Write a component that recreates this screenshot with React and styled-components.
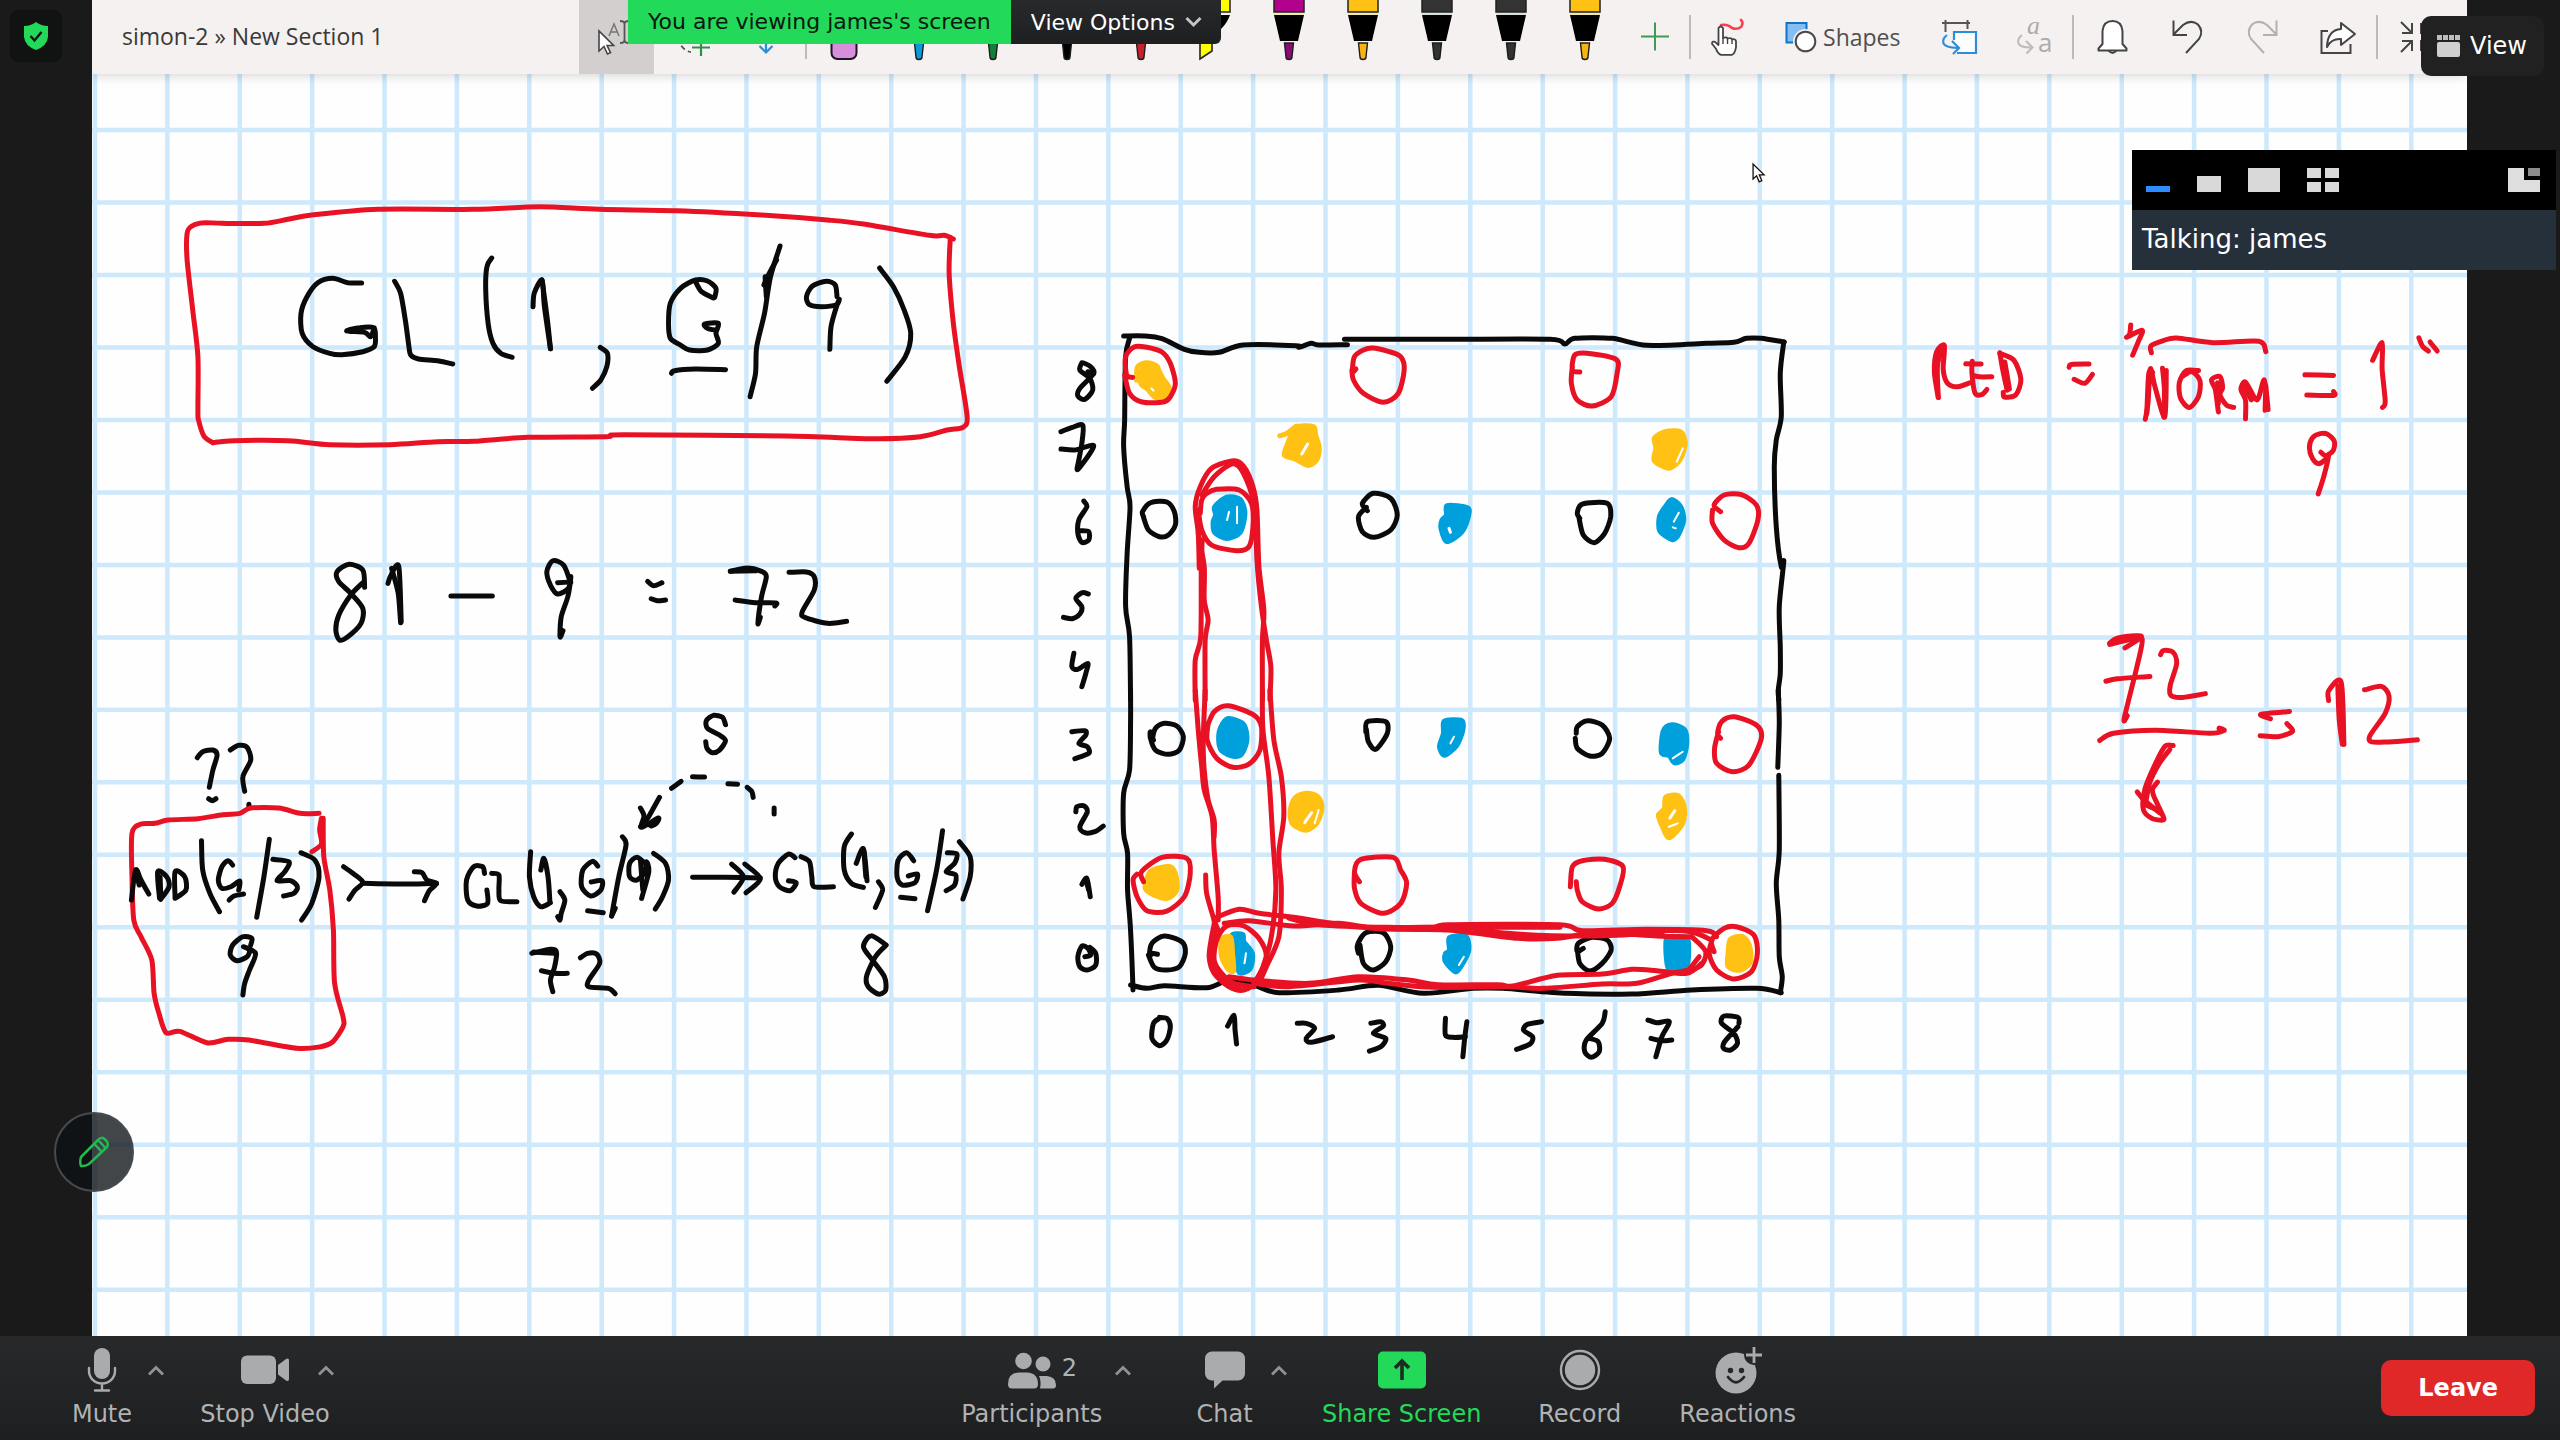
import React from "react";
import styled, { createGlobalStyle } from "styled-components";

const UI_FONT = '"DejaVu Sans", Verdana, sans-serif';
const DOC_FONT = '"Open Sans", "Segoe UI", sans-serif';

const GlobalStyle = createGlobalStyle`
  *, *::before, *::after { box-sizing: border-box; }
  body { margin: 0; background: #1a1a1a; font-family: ${UI_FONT}; overflow: hidden; }
  button { font-family: inherit; border: 0; padding: 0; margin: 0; background: none; color: inherit; cursor: pointer; }
  svg { display: block; }
`;

/* ---------- page frame ---------- */

const Page = styled.div`
  position: relative;
  display: grid;
  grid-template-rows: minmax(0, 1fr) auto;
  height: 100vh;
`;

const ShareArea = styled.main`
  display: flex;
  justify-content: center;
  min-height: 0;
  padding-right: 1px;
`;

const SharedScreen = styled.section`
  display: grid;
  grid-template-rows: 74px minmax(0, 1fr);
  height: 100%;
  aspect-ratio: 16 / 9;
  overflow: hidden;
  background: #fefefe;
`;

/* ---------- shared notebook ribbon ---------- */

const Ribbon = styled.header`
  position: relative;
  display: flex;
  align-items: stretch;
  padding: 0 13px 0 30px;
  background: #f4f1f0;
  box-shadow: 0 2px 10px rgba(0, 0, 0, 0.16);
  font-family: ${DOC_FONT};
`;

const DocTitle = styled.h1`
  flex: 1;
  margin: 0;
  font-size: 23px;
  font-weight: 400;
  line-height: 72px;
  color: #3a3938;
  white-space: nowrap;
`;

const RibbonButton = styled.button`
  width: ${(p) => p.$w}px;
  flex: none;
  display: flex;
  align-items: center;
  background: ${(p) => (p.$active ? "#d2cfce" : "transparent")};
`;

const ShapesLabel = styled.span`
  font-family: ${DOC_FONT};
  font-size: 23px;
  line-height: 72px;
  color: #504f4e;
`;

const Divider = styled.span`
  flex: none;
  width: 2px;
  margin: 15px 1px;
  background: #bdbbba;
`;

/* ---------- overlays ---------- */

const ShareBanner = styled.div`
  position: absolute;
  top: 0;
  left: 628px;
  display: flex;
  height: 44px;
  font-size: 22px;
  line-height: 44px;
  white-space: nowrap;
`;

const BannerText = styled.span`
  padding: 0 20px;
  background: #23d959;
  color: #0c1710;
`;

const ViewOptions = styled.button`
  display: flex;
  align-items: center;
  gap: 10px;
  padding: 0 19px 0 20px;
  background: linear-gradient(#28292b, #1d1f20);
  border-radius: 0 0 6px 0;
  color: #fff;
  font-size: 22px;
`;

const ShieldButton = styled.button`
  position: absolute;
  top: 10px;
  left: 10px;
  display: grid;
  place-items: center;
  width: 52px;
  height: 52px;
  border-radius: 8px;
  background: #101312;
`;

const ViewButton = styled.button`
  position: absolute;
  top: 16px;
  right: 16px;
  display: flex;
  align-items: center;
  gap: 10px;
  height: 60px;
  padding: 0 17px 0 16px;
  border-radius: 10px;
  background: #212121;
  color: #fff;
  font-size: 24px;
`;

const AnnotateButton = styled.button`
  position: absolute;
  left: 54px;
  bottom: 248px;
  display: grid;
  place-items: center;
  width: 80px;
  height: 80px;
  border: 2px solid #464a52;
  border-radius: 50%;
  background: rgba(13, 18, 21, 0.78);
`;

const SpeakerPanel = styled.aside`
  position: absolute;
  top: 150px;
  right: 4px;
  width: 424px;
`;

const PanelModes = styled.div`
  display: flex;
  gap: 1px;
  height: 60px;
  padding: 0 1px;
  background: #000;
`;

const ModeButton = styled.button`
  display: grid;
  justify-content: center;
  align-content: center;
  width: ${(p) => p.$w}px;
  margin-left: ${(p) => (p.$end ? "auto" : "0")};
`;

const Talking = styled.p`
  margin: 0;
  height: 60px;
  padding: 0 10px;
  background: #26303a;
  color: #fff;
  font-size: 26px;
  line-height: 58px;
`;

/* ---------- meeting controls ---------- */

const Controls = styled.footer`
  display: flex;
  justify-content: space-between;
  align-items: center;
  height: 104px;
  padding: 0 25px 0 34px;
  background: linear-gradient(#27292b, #1d1f20);
  color: #b1b2b3;
  font-size: 24px;
`;

const ToolGroup = styled.div`
  display: flex;
  gap: 20px;
  padding-right: ${(p) => p.$pad || 0}px;
`;

const Tool = styled.div`
  display: grid;
  grid-template-columns: minmax(0, 1fr) 28px;
  grid-template-rows: 48px 34px;
  width: ${(p) => p.$w}px;
`;

const ToolButton = styled.button`
  grid-area: 1 / 1 / 3 / 3;
  display: grid;
  grid-template-rows: 48px 34px;
  justify-items: center;
  color: ${(p) => (p.$green ? "#23d959" : "inherit")};
  font-size: 24px;
  line-height: 38px;
  white-space: nowrap;
`;

const CaretButton = styled.button`
  grid-area: 1 / 2 / 2 / 3;
  display: grid;
  place-items: center;
  z-index: 1;
`;

const IconBox = styled.span`
  position: relative;
  display: block;
`;

const Count = styled.span`
  position: absolute;
  top: 7px;
  left: 54px;
  line-height: 28px;
`;

const LeaveButton = styled.button`
  height: 56px;
  padding: 0 37px;
  border-radius: 10px;
  background: #e02828;
  color: #fff;
  font-size: 24px;
  font-weight: 700;
`;

/* ---------- whiteboard ---------- */

const Board = styled.svg`
  width: 100%;
  height: 100%;
`;

const INK = { k: "#0a0a0a", r: "#e81224", b: "#00a0dc", y: "#ffc114", w: "#ffffff" };

const BLOCKS = [
  {
    x: 90, y: 180, kx: 1.668, ky: 3, w: 5,
    strokes: [
      "r: 205,788 190,768 181,720 180,690 180,530 172,400 162,240 162,160 170,138 190,128 220,130 290,130 330,118 370,105 480,88 640,88 750,80 850,88 980,92 1120,105 1230,120 1290,132 1400,166 1425,166 1440,177",
      "r: 1435,172 1433,280 1440,430 1450,560 1463,710 1456,742 1430,750 1385,770 1310,776 1160,768 890,764 860,770 730,772 640,784 580,785 500,794 400,794 330,782 240,782 205,788",
      "k: 453,309 430,308 405,295 380,308 362,350 352,400 354,460 372,500 400,520 420,524 455,515 474,500 476,470 473,443 450,443 428,453 458,457 468,470 474,443",
      "k: 508,304 518,340 526,420 532,500 535,525 548,537 580,542 605,552",
      "k: 670,234 662,260 660,330 664,430 672,490 685,520 704,532",
      "k: 739,380 741,340 754,300 758,380 768,506",
      "k: 754,300 763,420 768,506",
      "k: 851,502 863,520 862,560 852,600 838,625",
      "k: 1042,352 1044,325 1030,303 1010,300 985,325 968,370 965,430 968,475 985,495 1000,510 1030,510 1048,490 1044,460 1048,430 1025,432 1030,445 1044,450",
      "k: 1010,305 1020,335 1040,354",
      "k: 970,580 975,572 1010,567 1060,569",
      "k: 1151,198 1135,290 1125,400 1112,500 1110,580 1101,650",
      "k: 1124,315 1130,290 1145,240",
      "k: 1128,350 1126,290",
      "k: 1246,350 1243,315 1228,304 1205,318 1195,350 1200,374 1220,380 1245,374 1250,358 1246,375 1236,440 1234,508",
      "k: 1317,264 1340,320 1358,390 1369,460 1360,530 1329,604",
      "k: 458,1222 455,1170 432,1153 412,1175 415,1205 435,1240 455,1285 452,1330 430,1370 416,1380 410,1350 415,1305 435,1245 455,1208",
      "k: 497,1210 502,1185 515,1160 519,1325",
      "k: 503,1165 514,1240 518,1328",
      "k: 602,1248 671,1248",
      "k: 800,1200 790,1155 772,1142 762,1175 768,1215 780,1242 798,1225 802,1190 797,1250 786,1310 784,1370 789,1352",
      "k: 780,1208 802,1206",
      "k: 930,1204 940,1217 954,1208",
      "k: 936,1256 946,1262 960,1260",
      "k: 1068,1174 1095,1164 1120,1174 1128,1190 1120,1250 1114,1330 1118,1312",
      "k: 1068,1174 1110,1172",
      "k: 1076,1260 1110,1268 1144,1269 1142,1278",
      "k: 1166,1177 1195,1176 1208,1190 1208,1230 1188,1295 1192,1312 1230,1330 1262,1324",
    ],
  },
  {
    x: 90, y: 690, kx: 1.668, ky: 3, w: 5,
    strokes: [
      "k: 179,203 188,185 205,180 212,195 205,240 199,292",
      "k: 198,326 204,332 210,326",
      "k: 234,180 248,166 262,172 268,210 255,260 258,304",
      "k: 265,343 265,350",
      "k: 1060,104 1055,82 1040,76 1028,92 1030,115 1050,135 1060,152 1050,180 1038,188 1029,175 1027,155",
      "k: 1005,260 1025,261",
      "k: 986,274 970,295",
      "k: 950,322 938,360 930,385 918,410",
      "k: 1064,281 1080,283",
      "k: 1096,292 1104,305 1106,322",
      "k: 1141,354 1141,372",
      "k: 918,354 924,378 920,412 948,384 942,404 922,400",
      "k: 926,392 936,408 944,396",
      "r: 382,370 350,370 315,354 268,354 250,370 222,374 180,386 130,390 108,400 85,402 70,430 70,560 73,690 85,740 103,810 107,910 115,970 127,1028 150,1024 195,1058 230,1048 265,1050 345,1075 385,1070 405,1055 422,1010 422,980 408,880 406,720 400,600 390,500 389,385",
      "r: 386,385 383,420 386,462 370,485",
      "r: 386,400 388,450",
      "k: 69,630 76,540 85,570 98,612",
      "k: 77,545 82,585",
      "k: 116,625 113,545 128,560 132,590 118,628",
      "k: 117,560 118,620",
      "k: 142,625 142,545 158,560 160,600 142,625",
      "k: 186,452 188,540 200,610 216,665",
      "k: 238,525 230,512 220,530 214,570 220,595 235,590 250,573 248,600",
      "k: 232,630 240,618 256,612",
      "k: 299,448 290,560 278,682",
      "k: 305,508 332,515 325,545 312,572 335,572 346,590 340,610 323,618",
      "k: 352,488 375,510 382,560 370,640 353,690",
      "k: 423,530 440,552 455,577 442,600 432,627",
      "k: 455,580 530,582 578,580",
      "k: 541,545 554,548 562,570 578,580 566,602 558,632",
      "k: 658,550 655,530 640,530 628,570 630,630 645,648 663,640 662,600",
      "k: 670,550 682,555 682,600 685,632 712,635",
      "k: 735,485 733,560 740,620 752,650 768,638",
      "k: 752,540 757,505 764,560 767,632",
      "k: 784,605 792,630 786,670 784,690 780,680",
      "k: 847,528 838,514 822,540 820,590 835,618 852,600 854,572 836,576",
      "k: 830,662 856,668",
      "k: 888,440 894,465 882,560 870,678",
      "k: 876,655 870,678",
      "k: 926,520 912,502 900,520 900,560 912,570 925,548 928,515 932,545 920,625",
      "k: 918,510 922,600",
      "k: 940,490 960,520 965,570 955,620 943,657",
      "k: 1005,562 1060,562 1118,564",
      "k: 1070,522 1090,560 1074,606",
      "k: 1092,522 1118,566 1094,608",
      "k: 1176,503 1165,492 1148,520 1143,560 1150,590 1168,602 1178,578 1165,572",
      "k: 1186,500 1200,515 1204,560 1208,590 1240,590",
      "k: 1270,432 1258,470 1258,540 1270,580 1290,592",
      "k: 1278,520 1290,476 1296,572",
      "k: 1291,485 1294,560",
      "k: 1315,575 1322,600 1310,652",
      "k: 1374,512 1362,488 1348,510 1346,560 1355,585 1376,578 1380,552 1365,558",
      "k: 1352,622 1376,626",
      "k: 1422,422 1412,540 1397,662",
      "k: 1430,488 1446,492 1442,520 1428,545 1444,555 1442,585 1428,602",
      "k: 1450,455 1468,500 1468,560 1456,627",
      "k: 268,765 270,745 255,740 238,765 234,795 245,812 262,800 266,780 256,770 276,790 266,840 258,880 255,915",
      "k: 737,790 768,778 778,785 775,830 768,870 772,905",
      "k: 740,786 775,790",
      "k: 753,842 775,850 796,850",
      "k: 818,803 830,790 845,792 850,820 832,870 832,890 865,895 876,911",
      "k: 1328,765 1303,737 1290,770 1305,810 1325,860 1327,900 1315,912 1298,890 1295,860 1310,800 1328,765",
    ],
  },
  {
    x: 1040, y: 320, kx: 2.0103, ky: 3, w: 5,
    strokes: [
      "k: 168,48 210,48 245,56 290,88 320,97 360,97 408,75 515,77 520,82 545,70 560,75 618,74",
      "k: 612,58 820,58 1025,58 1055,72 1075,55 1150,55 1220,76 1340,70 1395,67 1420,55 1450,55 1496,66",
      "k: 180,55 172,110 170,300 168,380 175,500 181,560 175,700 172,860 180,950 182,1140",
      "k: 1495,66 1488,160 1490,290 1480,360 1476,440 1480,620 1490,740 1495,725 1486,860 1488,980 1488,1060 1484,1110 1485,1140",
      "k: 84,128 80,150 100,175 106,210 90,238 76,228 80,205 108,160 100,138 86,128",
      "k: 96,155 108,160",
      "k: 42,335 65,322 86,316 84,370 78,420 76,448 108,378 70,390 42,387",
      "k: 88,543 94,560 78,600 76,640 84,667 98,660 98,635 82,632",
      "k: 97,822 85,818 72,835 84,860 80,882 65,896 47,892",
      "k: 68,1000 64,1040 76,1048 96,1030 92,1060 84,1100",
      "y: 194,180 196,140 215,128 236,140 240,170",
      "yf: 205,145 215,140 236,145 248,175 260,200 260,228 245,238 228,230 215,208 203,195 200,170",
      "w1: 228,212 224,205",
      "y: 482,347 496,340 515,318",
      "yf: 513,321 550,318 555,345 562,380 558,418 540,438 512,418 490,406 497,370",
      "w2: 538,372 526,402",
      "yf: 1234,354 1255,334 1288,334 1298,370 1288,418 1265,446 1234,423 1237,385",
      "w1: 1292,385 1280,425",
      "bf: 350,560 375,530 403,537 413,580 403,638 375,657 350,638 347,605 352,585",
      "w1: 396,560 396,610",
      "w1: 380,575 376,600",
      "bf: 818,555 860,562 862,590 848,638 817,666 805,625 807,600 816,585",
      "w2: 825,637 822,625",
      "bf: 1270,537 1288,557 1295,600 1283,648 1270,660 1245,634 1244,590 1257,557",
      "w1: 1284,578 1274,605",
      "w1: 1272,622 1278,625",
      "r: 186,172 174,165 172,110 190,80 215,82 245,96 262,130 272,190 262,230 248,246 205,246 180,220 170,165",
      "r: 635,147 628,155 632,110 650,90 668,84 700,94 725,110 732,150 720,220 690,247 650,220 630,180 627,150",
      "r: 1085,156 1070,150 1075,105 1100,100 1158,118 1160,160 1148,230 1110,258 1080,240 1068,190 1070,140",
      "r: 1368,575 1355,555 1375,525 1410,524 1440,555 1443,600 1425,670 1405,683 1375,660 1352,610 1352,570",
      "r: 322,580 325,540 335,520 355,508 400,510 425,550 428,620 420,680 395,692 345,675 325,630 318,570",
      "k: 208,590 206,575 222,548 255,546 270,575 272,615 258,645 240,650 218,630 208,592",
      "k: 658,572 648,550 670,520 705,535 718,585 705,630 672,652 648,635 640,590 656,562",
      "k: 1085,595 1080,580 1090,552 1140,550 1147,590 1135,640 1114,668 1092,645 1083,590",
      "r: 320,745 318,640 312,560 322,500 345,445 390,422 410,440 428,500 436,570 440,740 450,870 447,960 447,1140",
      "r: 318,640 330,740 330,840 338,900 332,960 332,1140",
      "r: 326,660 324,740 323,950 312,1020 312,1140",
      "r: 434,580 436,720 445,860 455,960 464,1040 462,1140",
      "r: 325,525 350,470 385,432 405,450 425,520 434,600",
    ],
  },
  {
    x: 1040, y: 690, kx: 2.0103, ky: 3, w: 5,
    strokes: [
      "k: 182,0 182,100 180,240 168,310 168,430 176,490 176,600 182,720 187,900",
      "k: 182,885 215,895 250,887 335,893 380,870 430,885 480,908 600,900 680,886 770,910 870,895 930,895 1060,910 1190,912 1310,900 1440,895 1490,908",
      "k: 1484,0 1486,100 1483,232",
      "k: 1485,256 1486,480 1480,580 1485,690 1486,800 1492,860 1488,908",
      "k: 64,125 90,122 92,135 78,160 95,170 98,190 70,206",
      "k: 72,365 74,350 88,347 95,365 80,410 90,428 110,425 127,408",
      "k: 84,583 94,565 101,620",
      "k: 92,570 98,600",
      "k: 90,800 102,795 96,775 84,768 76,800 80,830 95,840 112,825 112,790 100,772",
      "k: 228,150 222,125 222,145 232,180 258,193 280,180 288,140 275,108 250,100 232,115 226,145",
      "k: 655,125 658,95 695,95 698,130 675,178 660,155 656,118",
      "k: 1078,130 1080,110 1100,92 1130,105 1145,145 1130,190 1105,198 1080,175 1076,145",
      "k: 236,793 225,790 220,800 225,760 250,738 285,755 292,790 280,830 255,840 230,832 218,795",
      "k: 640,790 638,765 655,728 690,728 705,770 695,815 670,840 650,820 643,765",
      "k: 1092,775 1080,785 1082,760 1110,742 1140,750 1148,780 1130,820 1105,843 1085,820 1080,775",
      "bf: 378,84 410,102 417,150 406,193 388,200 364,183 358,150 362,112",
      "bf: 812,92 848,90 851,120 838,168 813,197 802,170 810,130",
      "w1: 832,140 825,160",
      "bf: 1252,122 1270,103 1296,117 1301,160 1293,208 1275,220 1264,198 1248,188",
      "w1: 1292,185 1272,205",
      "bf: 822,742 856,737 863,780 848,828 835,847 814,815 814,790 822,780",
      "w1: 852,800 842,825",
      "bf: 1258,747 1280,738 1303,747 1303,820 1290,840 1262,836",
      "bf: 384,737 408,732 411,755 428,790 423,838 400,849 393,800",
      "yf: 364,747 384,740 388,790 390,843 377,838 364,800",
      "w1: 414,790 411,820",
      "yf: 512,322 535,308 558,317 568,350 558,398 535,422 507,403 502,360",
      "w2: 546,368 532,398",
      "w1: 560,360 552,400",
      "yf: 1257,320 1283,315 1296,350 1293,400 1265,445 1250,410 1242,375 1254,355",
      "w2: 1276,362 1266,384",
      "w1: 1282,400 1264,410",
      "yf: 222,542 260,528 273,550 276,600 255,627 220,610 210,590",
      "yf: 1387,747 1413,738 1428,770 1428,820 1405,842 1382,830 1382,790",
      "r: 1368,145 1362,130 1370,95 1395,80 1440,105 1450,145 1425,225 1392,245 1360,220 1356,175 1364,125",
      "r: 208,575 204,545 245,502 295,505 302,550 290,620 255,663 215,662 195,620 187,570 195,552",
      "r: 642,575 632,545 645,508 710,502 725,540 737,580 725,640 690,670 645,640 632,595 632,545",
      "r: 1066,590 1070,530 1090,512 1135,508 1172,530 1165,590 1150,640 1122,657 1090,635 1080,600 1078,575",
      "r: 1355,785 1350,750 1375,715 1400,710 1435,735 1442,790 1430,845 1395,867 1360,840 1345,790 1352,745",
      "r: 336,110 350,65 378,47 430,75 445,110 442,180 420,222 388,232 355,205 336,150 338,100",
      "r: 312,0 318,120 325,230 330,300 346,380 350,480 358,620 358,690",
      "r: 332,0 328,150 330,240 338,330 350,390 350,440",
      "r: 447,0 448,120 460,260 468,450 474,600 465,740 448,830 430,880",
      "r: 462,0 470,150 485,260 490,380 480,490 485,600 480,740 455,830 440,880",
      "r: 333,555 335,610 350,690 358,720",
      "r: 352,690 345,740 340,800 350,850 380,890 410,900 440,870 455,800 440,745 410,708 375,708 355,750 350,810 365,850 390,880 430,890",
      "r: 350,690 352,760 345,820 370,875 400,890",
      "r: 350,685 400,658 440,670 510,682 580,698 650,712 780,718 820,704 1045,704 1090,722 1220,718 1340,722 1360,740",
      "r: 370,700 420,692 510,708 600,700 680,716 820,720 960,745 1040,745 1120,728 1240,738 1310,740",
      "r: 500,684 560,704 700,712 850,712 940,730 1090,738 1200,732 1250,722 1310,726 1350,750",
      "r: 1310,740 1338,785 1325,830 1270,850 1200,880 1130,882 1010,895 940,890 790,892 700,880 640,870 500,890 430,880",
      "r: 1330,820 1300,850 1240,842 1190,838 1130,852 1040,856 950,888 920,884 800,884 740,870 640,860 540,880 430,870 380,860",
      "r: 830,712 1045,712",
      "r: 1090,730 1250,730",
      "r: 1325,800 1305,838",
      "k: 240,985 228,1000 225,1045 240,1067 255,1050 262,1010 255,985 240,982",
      "k: 377,1008 390,976 392,1020 395,1062",
      "k: 517,1000 535,1000 552,1015 535,1045 545,1057 588,1040",
      "k: 665,1000 685,995 690,1008 670,1030 695,1045 685,1070 662,1083",
      "k: 815,985 815,1035 830,1042 855,1040",
      "k: 858,995 854,1040 850,1100",
      "k: 1008,995 980,1003 972,1020 990,1040 985,1062 958,1078",
      "k: 1136,965 1130,1000 1098,1050 1095,1085 1108,1102 1124,1085 1122,1055 1105,1045",
      "k: 1222,990 1240,998 1265,995 1250,1040 1238,1100",
      "k: 1228,1045 1250,1052 1270,1050",
      "k: 1405,1000 1403,982 1375,978 1370,1000 1395,1030 1402,1060 1388,1080 1374,1075 1376,1055 1403,1010",
    ],
  },
  {
    x: 1880, y: 300, kx: 2.6133, ky: 2.9037, w: 5,
    strokes: [
      "r: 152,283 142,210 148,150 168,132 165,200 175,240 200,252 235,240",
      "r: 165,135 150,190 152,283",
      "r: 224,185 264,186",
      "r: 241,178 240,210 248,270 265,275 279,260",
      "r: 242,218 260,223 292,223",
      "r: 313,153 320,200 332,262",
      "r: 313,155 350,175 368,230 355,275 325,282 322,268",
      "r: 326,180 338,258",
      "r: 494,195 500,187 546,186",
      "r: 507,230 535,242 555,216",
      "r: 655,73 652,100 645,108 685,88 675,120 660,160",
      "r: 709,153 708,133 740,118 775,110 870,124 990,120 1008,150",
      "r: 693,346 700,300 706,200 718,250 744,340 748,205",
      "r: 697,330 702,215 712,210",
      "r: 738,198 743,260 742,340",
      "r: 832,205 800,205 782,240 785,285 808,312 832,280 836,235 815,208 790,222",
      "r: 884,325 876,260 866,232 888,222 895,255 888,275 905,305 924,312",
      "r: 882,240 884,300",
      "r: 955,345 955,290 943,260 955,238 985,290 1004,232 1014,318",
      "r: 948,245 970,290",
      "r: 1008,250 1006,320",
      "r: 1110,217 1185,219",
      "r: 1115,276 1185,277 1185,266",
      "r: 1287,175 1312,124 1312,200 1320,295 1313,312",
      "r: 1408,110 1418,135 1433,148",
      "r: 1437,122 1456,148",
      "r: 1152,442 1165,452 1184,437 1187,410 1170,390 1150,388 1130,400 1122,430 1130,460 1145,475 1162,465 1172,450 1160,510 1145,563",
      "r: 600,1000 655,985 685,985 670,1070 638,1215 646,1207",
      "r: 600,996 620,982 670,975 682,980 640,1010",
      "r: 610,992 665,982",
      "r: 590,1107 620,1100 705,1093",
      "r: 733,1030 740,1018 765,1022 775,1055 758,1120 760,1148 790,1154 850,1143",
      "r: 574,1279 610,1258 720,1249 860,1258 899,1250 886,1243",
      "r: 766,1294 745,1295 720,1345 692,1420 688,1480 710,1505 738,1510 740,1500 715,1440 712,1420 725,1400",
      "r: 757,1305 730,1345 705,1400 695,1455",
      "r: 672,1428 690,1452 732,1490",
      "r: 690,1465 730,1482",
      "r: 1020,1216 995,1203 1070,1195",
      "r: 993,1265 1040,1268 1078,1252 1063,1230",
      "r: 1172,1163 1172,1135 1205,1110 1212,1290",
      "r: 1196,1120 1200,1220 1208,1290",
      "r: 1266,1132 1310,1122 1330,1150 1320,1200 1280,1265 1285,1283 1330,1283 1404,1277",
    ],
  },
];

/* Catmull-Rom smoothing of the sampled pen points. */
function smoothPath(pts, closed) {
  const n = pts.length;
  const at = (i) => (closed ? pts[(i + n) % n] : pts[Math.max(0, Math.min(n - 1, i))]);
  let d = `M${pts[0][0].toFixed(1)} ${pts[0][1].toFixed(1)}`;
  for (let i = 0; i < (closed ? n : n - 1); i++) {
    const [p0, p1, p2, p3] = [at(i - 1), at(i), at(i + 1), at(i + 2)];
    const c = [
      p1[0] + (p2[0] - p0[0]) / 7, p1[1] + (p2[1] - p0[1]) / 7,
      p2[0] - (p3[0] - p1[0]) / 7, p2[1] - (p3[1] - p1[1]) / 7,
      p2[0], p2[1],
    ].map((v) => v.toFixed(1));
    d += `C${c.join(" ")}`;
  }
  return d + (closed ? "Z" : "");
}

function Stroke({ block, data }) {
  const [kind, body] = data.split(": ");
  const pts = body.split(" ").map((s) => {
    const [x, y] = s.split(",").map(Number);
    return [block.x + x / block.kx, block.y + y / block.ky];
  });
  const colour = INK[kind[0]];
  const filled = kind[1] === "f";
  const width = kind[0] === "w" ? Number(kind[1]) + 1 : block.w;
  return (
    <path
      d={smoothPath(pts, filled)}
      fill={filled ? colour : "none"}
      stroke={colour}
      strokeWidth={filled ? 4 : width}
      strokeLinecap="round"
      strokeLinejoin="round"
    />
  );
}

const COLS = Array.from({ length: 33 }, (_, i) => 95 + i * 72.38);
const ROWS = Array.from({ length: 17 }, (_, i) => 130 + i * 72.48);

function Whiteboard() {
  return (
    <Board viewBox="92 74 2375 1262" preserveAspectRatio="xMinYMin slice" role="img" aria-label="Shared notebook page with handwritten notes">
      <g stroke="#cde9fb" strokeWidth="4.5">
        {ROWS.map((y) => <line key={y} x1="92" x2="2468" y1={y} y2={y} />)}
        {COLS.map((x) => <line key={x} x1={x} x2={x} y1="74" y2="1336" />)}
      </g>
      {BLOCKS.map((block, b) => (
        <g key={b}>
          {block.strokes.map((s, i) => <Stroke key={i} block={block} data={s} />)}
        </g>
      ))}
      <path d="M1753 164v15l3.500-3.200 2.600 6 2.600-1.200-2.500-5.800h4.800z" fill="#fff" stroke="#111" strokeWidth="1.3" />
    </Board>
  );
}

/* ---------- ribbon drawings ---------- */

function Glyph({ w = 75, children }) {
  return (
    <svg width={w} height="74" viewBox={`0 0 ${w} 74`} fill="none" aria-hidden="true">
      {children}
    </svg>
  );
}

function Pen({ body, tip }) {
  return (
    <Glyph w={74}>
      <path d="M22 -2h30v14h-30z" fill={body} stroke="#222" strokeWidth="1.500" />
      <path d="M22 14h30" stroke={body === "#333333" ? "#cfe0d8" : "#f7e58a"} strokeWidth="1.600" />
      <path d="M22 15h30l-6 26h-18z" fill="#000" />
      <path d="M32.500 43h9l-1.500 14a3 2.500 0 0 1-6 0z" fill={tip || body} stroke="#1c1c1c" strokeWidth="1.400" />
    </Glyph>
  );
}

function TextSelectIcon() {
  return (
    <Glyph>
      <path d="M30 36l5-12 5 12M31.700 32h6.600" stroke="#777" strokeWidth="1.500" />
      <path d="M41 21q4.500 0 4.500 3v16q0 3-4.500 3M50 21q-4.500 0-4.500 3v16q0 3 4.500 3" stroke="#555" strokeWidth="1.800" />
      <path d="M20 31v20l5-4.500 3.500 7.500 3-1.400-3.400-7.100h6.500z" fill="#fff" stroke="#444" strokeWidth="1.600" />
    </Glyph>
  );
}

function LassoIcon() {
  return (
    <Glyph>
      <circle cx="40" cy="37" r="15.500" stroke="#555" strokeWidth="1.800" strokeDasharray="5 3.500" />
      <path d="M37 39h20v18h-20z" fill="#f4f1f0" />
      <path d="M47 38v18M38 47.500h18" stroke="#2e8f4a" strokeWidth="2.200" />
    </Glyph>
  );
}

function InsertSpaceIcon() {
  return (
    <Glyph>
      <path d="M24 20h26M37 26v26M30.500 46l6.500 6.500 6.500-6.500" stroke="#2b8fd8" strokeWidth="2.200" />
    </Glyph>
  );
}

function EraserIcon() {
  return (
    <Glyph w={74}>
      <path d="M23.500 10h25v43a6 6 0 0 1-6 6h-13a6 6 0 0 1-6-6z" fill="#d78fdc" stroke="#1f1420" strokeWidth="2" />
    </Glyph>
  );
}

function HighlighterIcon() {
  return (
    <Glyph w={74}>
      <path d="M22 -2h30v14h-30z" fill="#ffff00" stroke="#222" strokeWidth="1.500" />
      <path d="M22 15h30q-3 8-8 13-7 6-10 13h-12z" fill="#000" />
      <path d="M22 43h12v8l-12 8z" fill="#ffff00" stroke="#222" strokeWidth="1.600" />
    </Glyph>
  );
}

function InkToShapeIcon() {
  return (
    <Glyph>
      <path d="M29 25q7-1 11 3 5 2 9-1 3-4 0-7" stroke="#fb3f4c" strokeWidth="2.600" strokeLinecap="round" />
      <path d="M26.500 45v-17q2-3 4.500 0v10q4-1.500 4.500.5 4-1 4.500.8 3.500-.5 4 2v6q-1 6-4 7.500h-11q-3-1-5-6l-4-5q0-3 3-2z" fill="#fff" stroke="#444" strokeWidth="1.800" strokeLinejoin="round" />
      <path d="M35.500 38v6M40 39v5M31 38v6" stroke="#444" strokeWidth="1.400" />
    </Glyph>
  );
}

function ShapesIcon() {
  return (
    <Glyph w={56}>
      <path d="M19.500 23h20v19.500h-20z" fill="#84bdf2" stroke="#1173c7" strokeWidth="2" />
      <circle cx="38.500" cy="41.500" r="12.500" fill="#f4f1f0" />
      <circle cx="38.500" cy="41.500" r="9.800" fill="#fff" stroke="#4a4a4a" strokeWidth="2" />
    </Glyph>
  );
}

function ConvertIcon() {
  return (
    <Glyph>
      <path d="M21 23h28M24.500 20v12M46.500 20v9" stroke="#555" strokeWidth="2" />
      <path d="M33 40v-8h22v21h-19" fill="#fdfdfd" stroke="#2b8fd8" strokeWidth="2.200" />
      <path d="M26 35q-5 4-3.500 8.500 2 4 14 4.500M31 41l7 7-6 6" stroke="#2b8fd8" strokeWidth="2.200" />
    </Glyph>
  );
}

const AaWrap = styled.span`
  position: relative;
  display: block;
  color: #adabab;
`;

const SmallA = styled.span`
  position: absolute;
  top: ${(p) => (p.$script ? 7 : 23)}px;
  left: ${(p) => (p.$script ? 31 : 42)}px;
  font-family: ${(p) => (p.$script ? '"Liberation Serif", serif' : DOC_FONT)};
  font-style: ${(p) => (p.$script ? "italic" : "normal")};
  font-size: 26px;
  line-height: 38px;
`;

function InkToTextIcon() {
  return (
    <AaWrap aria-hidden="true">
      <Glyph>
        <path d="M26 35q-5 4-3.500 8.500 2 4 12 4M30 41l6.500 6.500-6 6" stroke="#bcbaba" strokeWidth="2" />
      </Glyph>
      <SmallA $script>a</SmallA>
      <SmallA>a</SmallA>
    </AaWrap>
  );
}

function BellIcon() {
  return (
    <Glyph>
      <path d="M27.500 44v-13q1-10 10-10t10 10v13l4 4.500v2h-28v-2z" fill="#fff" stroke="#444" strokeWidth="2" strokeLinejoin="round" />
      <path d="M33.500 50.500q4 5 8 0" stroke="#444" strokeWidth="2" />
    </Glyph>
  );
}

function TurnIcon({ redo }) {
  return (
    <Glyph>
      <g transform={redo ? "translate(75 0) scale(-1 1)" : undefined}>
        <path d="M23.500 20.500v14.500h13.500M24 34l9-9q8-6 15-.5 6 7 1 14.500l-13 14" stroke={redo ? "#b3b1b0" : "#444"} strokeWidth="2" />
      </g>
    </Glyph>
  );
}

function ShareIcon() {
  return (
    <Glyph>
      <path d="M28 31h-6.500v22h29v-9" stroke="#444" strokeWidth="2" />
      <path d="M41 23l14 11-14 11v-6q-10-.5-14 8 .500-17 14-18z" fill="#fff" stroke="#444" strokeWidth="2" strokeLinejoin="round" />
    </Glyph>
  );
}

function CollapseIcon() {
  return (
    <Glyph>
      <path d="M22 22l11 11M33 23v10h-10M22 52l11-11M33 51v-10h-10M53 22l-11 11M42 23v10h10M53 52l-11-11M42 51v-10h10" stroke="#444" strokeWidth="2" />
    </Glyph>
  );
}

/* ---------- control bar drawings ---------- */

function ControlIcon({ children }) {
  return (
    <svg width="48" height="48" viewBox="0 0 48 48" fill="#aaabac" aria-hidden="true">
      {children}
    </svg>
  );
}

const ICONS = {
  mic: (
    <ControlIcon>
      <rect x="16" y="1" width="16" height="31" rx="8" />
      <path d="M11 21v3a13 12.500 0 0 0 26 0v-3M24 37v6M17 43.500h14" fill="none" stroke="#aaabac" strokeWidth="2.400" strokeLinecap="round" />
    </ControlIcon>
  ),
  video: (
    <ControlIcon>
      <rect x="0" y="8.500" width="35" height="28.500" rx="6" />
      <path d="M37 18l8-6q3-1.500 3 1.500v18.500q0 3-3 1.500l-8-6z" />
    </ControlIcon>
  ),
  people: (
    <ControlIcon>
      <circle cx="15.500" cy="14" r="8.300" />
      <circle cx="35" cy="17" r="7.500" />
      <path d="M0 37q0-11 11-11.500h8q11 .5 11 11.500 0 4.500-4 4.500h-22q-4 0-4-4.500zM32 41.500q1.500-8-1-12.500h8q9 1 9 9 0 3.500-3 3.500z" />
    </ControlIcon>
  ),
  chat: (
    <ControlIcon>
      <path d="M11 4.500h26a7 7 0 0 1 7 7v15a7 7 0 0 1-7 7h-15.500l-8.500 8v-8h-2a7 7 0 0 1-7-7v-15a7 7 0 0 1 7-7z" />
    </ControlIcon>
  ),
  share: (
    <ControlIcon>
      <rect y="4.500" width="48" height="37" rx="5" fill="#23d959" />
      <path d="M24 33v-18M17 21l7-7 7 7" fill="none" stroke="#1f2a22" strokeWidth="3.600" />
    </ControlIcon>
  ),
  record: (
    <ControlIcon>
      <circle cx="24" cy="23" r="19" fill="none" stroke="#aaabac" strokeWidth="2.400" />
      <circle cx="24" cy="23" r="15.200" />
    </ControlIcon>
  ),
  react: (
    <ControlIcon>
      <circle cx="22" cy="26" r="20.500" />
      <circle cx="40" cy="8" r="10" fill="#252729" />
      <path d="M40 0v16M32 8h16" stroke="#aaabac" strokeWidth="2.800" />
      <circle cx="16.500" cy="23.500" r="2.700" fill="#252729" />
      <circle cx="27.500" cy="23.500" r="2.700" fill="#252729" />
      <path d="M14 30q8 10.500 16 0" fill="none" stroke="#252729" strokeWidth="2.800" strokeLinecap="round" />
    </ControlIcon>
  ),
};

function Control({ w, icon, label, count, menu, green }) {
  return (
    <Tool $w={w}>
      <ToolButton $green={green}>
        <IconBox>
          {ICONS[icon]}
          {count && <Count>{count}</Count>}
        </IconBox>
        <span>{label}</span>
      </ToolButton>
      {menu && (
        <CaretButton aria-label={`${label} menu`}>
          <svg width="18" height="12" viewBox="0 0 18 12" fill="none" aria-hidden="true">
            <path d="M2 9.500l7-7 7 7" stroke="#909294" strokeWidth="2.800" />
          </svg>
        </CaretButton>
      )}
    </Tool>
  );
}

const PENS = [
  ["#0a9bdc"], ["#12803a"], ["#000000"], ["#c8202c"], null,
  ["#b0008c", "#8a0a76"], ["#ffc114", "#f5b414"], ["#333333"], ["#333333"], ["#ffc114", "#f5b414"],
];

export default function App() {
  return (
    <Page>
      <GlobalStyle />
      <ShareArea>
        <SharedScreen>
          <Ribbon>
            <DocTitle>simon-2 » New Section 1</DocTitle>
            <RibbonButton $w={75} $active aria-label="Select text"><TextSelectIcon /></RibbonButton>
            <RibbonButton $w={75} aria-label="Lasso select"><LassoIcon /></RibbonButton>
            <RibbonButton $w={75} aria-label="Insert space"><InsertSpaceIcon /></RibbonButton>
            <Divider />
            <RibbonButton $w={74} aria-label="Eraser"><EraserIcon /></RibbonButton>
            {PENS.map((pen, i) => (
              <RibbonButton $w={74} key={i} aria-label={pen ? `Pen ${i + 1}` : "Highlighter"}>
                {pen ? <Pen body={pen[0]} tip={pen[1]} /> : <HighlighterIcon />}
              </RibbonButton>
            ))}
            <RibbonButton $w={66} aria-label="Add pen">
              <Glyph w={66}><path d="M33 22.500v28M19 36.500h28" stroke="#3f9a58" strokeWidth="2" /></Glyph>
            </RibbonButton>
            <Divider />
            <RibbonButton $w={75} aria-label="Draw with touch"><InkToShapeIcon /></RibbonButton>
            <RibbonButton $w={154}><ShapesIcon /><ShapesLabel>Shapes</ShapesLabel></RibbonButton>
            <RibbonButton $w={75} aria-label="Ink to shape"><ConvertIcon /></RibbonButton>
            <RibbonButton $w={75} aria-label="Ink to text"><InkToTextIcon /></RibbonButton>
            <Divider />
            <RibbonButton $w={75} aria-label="Notifications"><BellIcon /></RibbonButton>
            <RibbonButton $w={75} aria-label="Undo"><TurnIcon /></RibbonButton>
            <RibbonButton $w={75} aria-label="Redo"><TurnIcon redo /></RibbonButton>
            <RibbonButton $w={75} aria-label="Share"><ShareIcon /></RibbonButton>
            <Divider />
            <RibbonButton $w={75} aria-label="Exit full screen"><CollapseIcon /></RibbonButton>
          </Ribbon>
          <Whiteboard />
        </SharedScreen>
      </ShareArea>

      <Controls>
        <ToolGroup $pad={12}>
          <Control w={136} icon="mic" label="Mute" menu />
          <Control w={150} icon="video" label="Stop Video" menu />
        </ToolGroup>
        <ToolGroup>
          <Control w={210} icon="people" label="Participants" count="2" menu />
          <Control w={136} icon="chat" label="Chat" menu />
          <Control w={178} icon="share" label="Share Screen" green />
          <Control w={138} icon="record" label="Record" />
          <Control w={138} icon="react" label="Reactions" />
        </ToolGroup>
        <LeaveButton>Leave</LeaveButton>
      </Controls>

      <ShieldButton aria-label="Meeting is encrypted">
        <svg width="26" height="30" viewBox="0 0 26 30" aria-hidden="true">
          <path d="M13 1q5 4 12 4v11q-1 9-12 13-11-4-12-13v-11q7 0 12-4z" fill="#23d959" />
          <path d="M7.500 15l4 4.500 7-8.500" fill="none" stroke="#101312" strokeWidth="2.400" />
        </svg>
      </ShieldButton>

      <ShareBanner>
        <BannerText>You are viewing james's screen</BannerText>
        <ViewOptions>
          View Options
          <svg width="17" height="12" viewBox="0 0 17 12" fill="none" aria-hidden="true">
            <path d="M1.500 2l7 7 7-7" stroke="#c4c5c6" strokeWidth="3" />
          </svg>
        </ViewOptions>
      </ShareBanner>

      <ViewButton>
        <svg width="23" height="24" viewBox="0 0 23 24" fill="#cfcfcf" aria-hidden="true">
          <path d="M0 1h5v5h-5zM6 1h5v5h-5zM12 1h5v5h-5zM18 1h5v5h-5z" fill="#bdbdbd" />
          <rect y="8" width="23" height="15" rx="2" />
        </svg>
        View
      </ViewButton>

      <SpeakerPanel>
        <PanelModes>
          <ModeButton $w={50} aria-label="Hide video">
            <svg width="24" height="24" aria-hidden="true"><rect y="18" width="24" height="6" fill="#2d8cff" /></svg>
          </ModeButton>
          <ModeButton $w={50} aria-label="Small video">
            <svg width="24" height="24" aria-hidden="true"><rect y="8" width="24" height="16" fill="#d9d9d9" /></svg>
          </ModeButton>
          <ModeButton $w={58} aria-label="Large video">
            <svg width="32" height="24" aria-hidden="true"><rect width="32" height="24" fill="#d9d9d9" /></svg>
          </ModeButton>
          <ModeButton $w={58} aria-label="Gallery">
            <svg width="32" height="24" fill="#d9d9d9" aria-hidden="true">
              <path d="M0 0h14v10h-14zM18 0h14v10h-14zM0 14h14v10h-14zM18 14h14v10h-14z" />
            </svg>
          </ModeButton>
          <ModeButton $w={62} $end aria-label="Dock panel">
            <svg width="32" height="24" aria-hidden="true">
              <path d="M0 0h16v12h16v12h-32z" fill="#dedede" />
              <path d="M20 0h12v8h-12z" fill="#8c8c8c" />
            </svg>
          </ModeButton>
        </PanelModes>
        <Talking>Talking: james</Talking>
      </SpeakerPanel>

      <AnnotateButton aria-label="Annotate">
        <svg width="34" height="34" viewBox="0 0 34 34" fill="none" stroke="#23b850" strokeWidth="2.500" strokeLinejoin="round" aria-hidden="true">
          <path d="M4 22l17-17q3.500-4 7-.5l1.500 1.500q3 3.500-.5 7l-17 16q-4 2.500-8 2-1.500-4 0-9zM22 6l6 6.500M17.500 9l7 7.500" />
        </svg>
      </AnnotateButton>
    </Page>
  );
}
